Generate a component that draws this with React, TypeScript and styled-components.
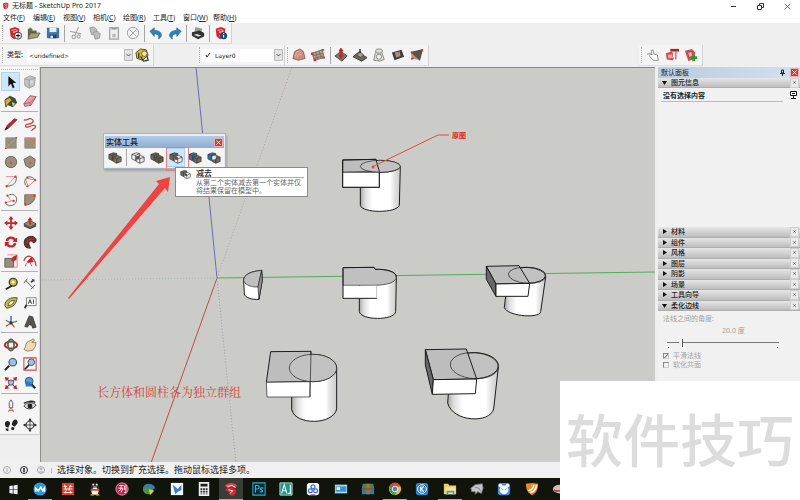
import React, { useState } from "react";
import styled, { createGlobalStyle, css } from "styled-components";

const Global = createGlobalStyle`
  * { box-sizing: border-box; }
  html, body, #root { height: 100%; }
  body {
    margin: 0;
    overflow: hidden;
    background: #efefef;
    color: #222;
    font: 7px/10px "Noto Sans", "Noto Sans CJK SC", sans-serif;
  }
  button, input, select { font: inherit; color: inherit; }
  button { padding: 0; border: 0; background: none; }
  svg { display: block; flex: none; }
`;

const Window = styled.div`
  height: 100%;
  display: flex;
  flex-direction: column;
`;

/* ---------- title and menu ---------- */
const TitleBar = styled.header`
  display: flex;
  align-items: center;
  gap: 2px;
  height: 12px;
  padding-left: 2px;
  background: #fff;
`;
const Title = styled.h1`
  flex: 1;
  margin: 0;
  font-size: 7px;
  font-weight: 400;
`;
const WindowButton = styled.button`
  width: 25px;
  height: 12px;
  display: grid;
  place-items: center;
`;
const MenuBar = styled.nav`
  display: flex;
  height: 11px;
  padding-left: 3px;
  background: #fff;
`;
const MenuButton = styled.button`
  min-width: 30px;
  text-align: left;
  line-height: 11px;
  white-space: nowrap;
`;
const AccessKey = styled.span`
  text-decoration: underline;
`;

/* ---------- toolbars ---------- */
const ToolbarRow = styled.div`
  display: flex;
  height: 22px;
  background: #efefef;
`;
const Toolbar = styled.div`
  display: flex;
  align-items: center;
  height: 21px;
  padding-right: 1px;
  background: #f4f4f4;
  border-right: 1px solid #d2d2d2;
  border-bottom: 1px solid #dedede;
`;
const Spring = styled.div<{ $grow?: number }>`
  flex: ${(p) => p.$grow ?? 1};
`;
const Handle = styled.span`
  width: 1px;
  height: 16px;
  margin: 0 2px;
  border-left: 1px dotted #aaa;
`;
const Divider = styled.span`
  width: 1px;
  height: 17px;
  margin: 0 1px 0 2px;
  background: #a6a6a6;
`;
const ToolButton = styled.button<{ $on?: boolean }>`
  width: 19px;
  height: 19px;
  display: grid;
  place-items: center;
  ${(p) => p.$on && css`background: #cfe5f8; box-shadow: inset 0 0 0 1px #aed3f2;`}
`;
const Field = styled.label`
  display: flex;
  align-items: center;
  gap: 4px;
  padding-left: 2px;
  white-space: nowrap;
`;
const SelectBox = styled.span<{ $w: number }>`
  display: flex;
  align-items: center;
  position: relative;
  width: ${(p) => p.$w}px;
  height: 13px;
  background: #fff;
`;
const Select = styled.select<{ $indent: number }>`
  appearance: none;
  width: 100%;
  height: 13px;
  padding: 0 10px 0 ${(p) => p.$indent}px;
  border: 0;
  background: transparent;
  font: 6px/13px "DejaVu Sans", sans-serif;
`;
const SelectMark = styled.svg<{ $end?: boolean }>`
  position: absolute;
  ${(p) => (p.$end ? "right: 0;" : "left: 3px;")}
  pointer-events: none;
`;

/* ---------- workspace ---------- */
const Workspace = styled.main`
  flex: 1;
  min-height: 0;
  display: grid;
  grid-template-columns: 40px minmax(0, 1fr) 145px;
`;
const Palette = styled.aside`
  background: #efefef;
`;
const PaletteInner = styled.div`
  padding: 2px 1px 0;
  background: #f5f5f5;
  border-bottom: 1px solid #ccc;
  border-right: 1px solid #ddd;
`;
const PaletteGrip = styled.div`
  height: 3px;
  border-top: 1px dotted #b5b5b5;
`;
const ToolGroup = styled.div`
  display: grid;
  grid-template-columns: 19px 19px;
  grid-auto-rows: 19px;
  & + & {
    margin-top: 1px;
    padding-top: 2px;
    border-top: 1px solid #b2b2b2;
  }
`;
const Canvas = styled.section`
  position: relative;
  overflow: hidden;
  background: #cbccc7;
  border-top: 1px solid #858585;
  border-left: 1px solid #8d8d8d;
`;
const Scene = styled.svg`
  width: 100%;
  height: 100%;
`;
const Note = styled.p<{ $x: number; $y: number; $big?: boolean }>`
  position: absolute;
  left: ${(p) => p.$x}px;
  top: ${(p) => p.$y}px;
  margin: 0;
  white-space: nowrap;
  color: ${(p) => (p.$big ? "#d4453c" : "#e02a20")};
  font-size: ${(p) => (p.$big ? 12 : 7)}px;
  font-weight: ${(p) => (p.$big ? 400 : 700)};
  line-height: ${(p) => (p.$big ? 16 : 10)}px;
  font-family: ${(p) => (p.$big ? `"Noto Serif CJK SC", ` : "")}"Noto Sans CJK SC", serif;
`;

/* ---------- floating solid tools ---------- */
const Floating = styled.div`
  position: absolute;
  left: 62px;
  top: 65px;
  width: 123px;
  padding: 2px 1px 1px;
  border: 1px solid #a7b4c6;
  background: #e6edf5;
  box-shadow: 1px 2px 2px #0003;
`;
const FloatingHead = styled.div`
  display: flex;
  align-items: center;
  justify-content: space-between;
  height: 12px;
  padding: 0 2px 0 1px;
  background: linear-gradient(#b4cbe6, #8eabd0);
  font-size: 8px;
  font-weight: 500;
`;
const RedClose = styled.button`
  width: 7px;
  height: 7px;
  display: grid;
  place-items: center;
  background: #c8403d;
  outline: 1px solid #e2b0b0;
`;
const FloatingTools = styled.div`
  display: flex;
  align-items: center;
  height: 19px;
  background: #f5f5f5;
`;
const Highlight = styled.span`
  position: absolute;
  left: 62px;
  top: 13px;
  width: 23px;
  height: 24px;
  border: 1px solid #e87f7f;
  pointer-events: none;
`;
const Tip = styled.div`
  position: absolute;
  left: 134px;
  top: 99px;
  width: 133px;
  height: 30px;
  display: grid;
  grid-template-columns: 20px 1fr;
  border: 1px solid #8b8b8b;
  background: #fff;
  color: #666;
  line-height: 8px;
`;
const TipIcon = styled.div`
  padding: 1px 0 0 4px;
`;
const TipTitle = styled.strong`
  display: block;
  height: 10px;
  line-height: 9px;
  margin: 0 3px 1px 0;
  color: #222;
  font-size: 8px;
  font-weight: 500;
  border-bottom: 1px solid #aaa;
`;
const TipLine = styled.span`
  display: block;
  white-space: nowrap;
`;

/* ---------- tray ---------- */
const Tray = styled.aside`
  margin-left: 3px;
  background: #f1f1f1;
`;
const TrayHead = styled.div`
  display: flex;
  align-items: center;
  height: 11px;
  padding: 0 2px 0 3px;
  gap: 6px;
  background: linear-gradient(90deg, #b9cbdf, #d3e1ef);
  font-size: 7px;
`;
const Grow = styled.span`
  flex: 1;
`;
const SectionHead = styled.div`
  flex: 1;
  display: flex;
  align-items: center;
  min-height: 10px;
  background: linear-gradient(#e6e6e6, #bdbdbd);
  border-bottom: 1px solid #adadad;
`;
const SectionToggle = styled.button`
  flex: 1;
  display: flex;
  align-items: center;
  gap: 4px;
  padding-left: 4px;
  line-height: 9px;
  font-weight: 500;
`;
const SectionClose = styled.button`
  width: 7px;
  height: 8px;
  margin-right: 2px;
  display: grid;
  place-items: center;
  background: #e9e9e9;
  outline: 1px solid #cfcfcf;
`;
const EntityBody = styled.div`
  display: flex;
  align-items: flex-start;
  justify-content: space-between;
  height: 139px;
  padding: 3px 3px 0 3px;
`;
const EntityText = styled.p`
  flex: 1;
  margin: 0 7px 0 0;
  padding: 0 2px;
  border-bottom: 1px solid #bbb;
  line-height: 10px;
  font-weight: 700;
`;
const Sections = styled.div`
  display: flex;
  flex-direction: column;
  height: 84px;
`;
const Soften = styled.div`
  padding: 3px 5px;
  color: #a2a2a2;
`;
const Angle = styled.label`
  display: grid;
  grid-template-columns: 1fr;
`;
const AngleValue = styled.output`
  display: block;
  margin: 2px 0 2px 59px;
`;
const Range = styled.input`
  appearance: none;
  width: 112px;
  height: 9px;
  margin: 0 0 0 4px;
  background: linear-gradient(#777, #777) 0 4px / 100% 1px no-repeat;
  &::-webkit-slider-thumb {
    appearance: none;
    width: 4px;
    height: 8px;
    background: #f1f1f1;
    border-right: 1px solid #555;
    border-left: 1px solid #f1f1f1;
  }
`;
const Ticks = styled.div`
  display: flex;
  justify-content: space-between;
  width: 110px;
  height: 4px;
  margin-left: 5px;
  &::before, &::after { content: ""; width: 1px; height: 1px; background: #555; }
`;
const Check = styled.label`
  display: flex;
  align-items: center;
  gap: 4px;
  height: 9px;
`;
const CheckInput = styled.input`
  appearance: none;
  width: 6px;
  height: 6px;
  margin: 0;
  border: 1px solid #888;
  border-right-color: #ccc;
  border-bottom-color: #ccc;
  &:checked { background: linear-gradient(135deg, #f1f1f1 40%, #888 45%, #888 60%, #f1f1f1 65%); }
`;

/* ---------- status and task bar ---------- */
const Status = styled.footer`
  display: flex;
  align-items: center;
  gap: 9px;
  height: 16px;
  padding-left: 3px;
  background: #f0f0f0;
  font-size: 9px;
  line-height: 16px;
`;
const StatusText = styled.span`
  margin-left: -4px;
`;
const StatusRule = styled.span`
  width: 1px;
  height: 5px;
  margin-left: -3px;
  background: #bbb;
`;
const TaskBar = styled.nav`
  height: 22px;
  background: #11140b;
`;
const TaskList = styled.div`
  display: flex;
  justify-content: space-between;
  max-width: 572px;
  height: 22px;
  padding: 0 1px;
`;
const TaskButton = styled.button<{ $state?: "open" | "front" }>`
  width: 24px;
  display: grid;
  place-items: center;
  ${(p) => p.$state === "front" && "background: #393c36;"}
  ${(p) => p.$state && "box-shadow: inset 0 -1px #76b9ed;"}
`;
const Watermark = styled.div`
  position: fixed;
  right: 0;
  bottom: 0;
  width: 240px;
  height: 119px;
  display: flex;
  justify-content: center;
  background: #fff;
  color: #dcdcdc;
  font: 500 57px/112px "Noto Sans CJK SC", sans-serif;
  white-space: nowrap;
`;

/* ---------- icons, drawn on a 16 unit grid ---------- */
const R = "#c3262d";
const T = "#96917d";
const D = "#3b3b38";

const SuMark = () => (
  <g>
    <path d="M2 3 8 1l5 2-1 8-5 4-4-3Z" fill="#cf2730" />
    <path d="M4 5l5-1 2 2-5 1 4 2-1 3-3-1" fill="none" stroke="#f3c5c5" strokeWidth="1" />
  </g>
);
const Cubes = ({ a, b, line = "#3a3833" }: { a: string; b: string; line?: string }) => (
  <g stroke={line} strokeWidth=".8" strokeLinejoin="round">
    <path d="M1 4 6 2l4 1v6l-5 2-4-2Z" fill={a} />
    <path d="M1 4l4 1 5-2M5 5v6" fill="none" />
    <path d="M6 7l5-2 4 2v5l-5 2-4-2Z" fill={b} />
    <path d="M6 7l4 2 5-2M10 9v5" fill="none" />
  </g>
);

const art: Record<string, React.ReactNode> = {
  logo: <SuMark />,
  newDoc: <><SuMark /><circle cx="11.500" cy="11" r="4" fill="#fff" stroke="#222" /><path d="M11.500 8.500v5M9 11h5" stroke="#222" strokeWidth="1.200" /></>,
  open: <><path d="M1 3h4l1 2h5v4H4l-3 5Z" fill="#6c6449" /><path d="M4 8h11l-3 5-11 2Z" fill="#a59c78" stroke="#4d4736" strokeWidth=".7" /><path d="M3 2l3 3" stroke="#3c9a3c" strokeWidth="2" /></>,
  save: <><path d="M1 2h13l1 1v11H2l-1-1Z" fill="#3f75a8" /><path d="M4 2h8v5H4z" fill="#e6edf3" /><path d="M4 10h8v4H4z" fill="#26415e" /><path d="M5 11h3v3H5z" fill="#dde" /></>,
  cut: <g fill="none" stroke="#a5a5a5" strokeWidth="1.300"><path d="M11 1 7 10M1 6l13 3" /><circle cx="5.500" cy="12.500" r="2" /><circle cx="11" cy="12" r="1.800" /></g>,
  copy: <><path d="M2 2l5-1 3 3-1 5-5 1Z" fill="#bbb" stroke="#999" /><path d="M6 7l5-1 3 3-1 5-5 1Z" fill="#bbb" stroke="#999" /></>,
  paste: <><rect x="3" y="2" width="10" height="13" fill="#eee" stroke="#a5a5a5" strokeWidth="1.500" /><path d="M5 2h6v2H5z" fill="#999" /><path d="M6 9h4v4H6z" fill="#bbb" /></>,
  erase: <g fill="none" stroke="#9a9a9a"><circle cx="8" cy="8" r="6.500" /><path d="M4 4l8 8M12 4l-8 8" /></g>,
  undo: <path d="M1 6 6 2v3c6 0 9 3 8 7l-3 3c1-4-1-6-5-6v3Z" fill="#2b83bd" stroke="#17537d" strokeWidth=".6" />,
  redo: <path d="M15 6 10 2v3C4 5 1 8 2 12l3 3c-1-4 1-6 5-6v3Z" fill="#2b83bd" stroke="#17537d" strokeWidth=".6" />,
  print: <><path d="M5 1l8 2-2 5-7-1Z" fill="#9b9b9b" /><path d="M1 7l9-2 5 3v4l-7 3-7-4Z" fill="#333" /><path d="M3 10l5 2 4-1-5-2Z" fill="#ddd" /></>,
  info: <><SuMark /><circle cx="11" cy="11" r="4" fill="#1f4776" /><path d="M11 10v3M11 8v1" stroke="#fff" strokeWidth="1.300" /></>,
  tags: <><path d="M1 5l5-4 6 1 2 6-6 5-6-2Z" fill="#d9bd36" stroke="#50471b" /><circle cx="10" cy="6" r="3" fill="#eee9bd" stroke="#5c531f" /><path d="M4 5v6M6 9l3 5 5-1-1-4" fill="none" stroke="#333" strokeWidth="1.300" /></>,
  contours: <><path d="M1 12 3 4l6-3 4 3 2 8-8 2Z" fill="#c98b7c" stroke="#765047" strokeWidth=".8" /><path d="M4 10c0-6 3-7 6-5M6 11c0-4 2-5 5-3" fill="none" stroke="#e8c1b5" /></>,
  scratch: <><path d="M1 6l12-4 2 9-11 3Z" fill="#a7a08d" stroke="#5d594f" strokeWidth=".8" /><path d="M2 9l12-3M3 12l11-3M5 4l3 9M9 3l3 9" stroke="#5d594f" strokeWidth=".6" /><g fill="#db3335"><path d="M3 12h3v3H3zM0 5h3v3H0zM12 1h3v2h-3zM13 10h3v2h-3z" /></g></>,
  smoove: <><path d="M1 9l7-5 7 5-6 6Z" fill="#7a7669" stroke="#4b473d" /><path d="M8 1v10M6 4l2-3 2 3M6 8l2 3 2-3" fill="none" stroke={R} strokeWidth="2" /></>,
  stamp: <><path d="M0 10l6-5 10 6-6 4Z" fill="#6a675e" stroke="#373530" /><path d="M4 8l4-4 4 4-3 3Z" fill="#a9a596" stroke={D} /><path d="M8 6V1" stroke="#222" strokeWidth="1.500" /></>,
  drape: <g fill="#ddd" stroke="#8a8a86" strokeWidth="1.100"><path d="M2 14 4 5h7l3 8-5 2Z" /><ellipse cx="8" cy="3.500" rx="4" ry="2.500" /><circle cx="8" cy="10" r="3" fill="#eee" /></g>,
  detail: <><path d="M1 5l11-3 3 8-11 4Z" fill="#3d3b35" /><path d="M4 5l6-1 1 5-5 2Z" fill="#a38e84" /></>,
  flip: <><path d="M1 5l13-3-3 12Z" fill="#5b544a" stroke="#453d34" /><path d="M1 5l10 9-9-2Z" fill="#a39a84" /><path d="M1 4h2v2H1zM13 1h2v3h-2zM1 11h3v2H1z" fill="#d33" /></>,
  hand2: <path d="M1 7c5-1 4 0 3 2l4 5h6l-1-6-4-1-1-5-2 1 1 5-3-2" fill="#fff" stroke="#777" strokeWidth=".9" />,
  pages: <><path d="M1 6l7-2 3 5-2 5-7-1Z" fill="#cf4a4e" /><path d="M3 8l5-1 1 4-5 1Z" fill="#e9a5a4" /><path d="M6 1h10v3H6z" fill="#a5272c" /><path d="M9 5h5v6H9z" fill="#eee" /><path d="M12 4h1v9h-1z" fill="#a5272c" /></>,
  pagesAdd: <><path d="M1 3l8-2 4 4-1 7-7 3Z" fill="#cb5557" /><path d="M4 5l5-1 1 5-4 2Z" fill="#e7b1aa" stroke="#703033" strokeWidth=".7" /><path d="M11 8v7M8 11h7" stroke="#2c9a2c" strokeWidth="3" /></>,

  select: <path d="M5 1v12l3-3 2 5 2-1-2-5h4Z" fill="#111" />,
  component: <><path d="M2 4l6-3 6 2-1 9-6 3-5-3Z" fill="#c4c4c4" stroke="#999" /><path d="M2 4l5 2 7-3M7 6v9" fill="none" stroke="#999" /><circle cx="10" cy="8" r="2" fill="#ddd" /></>,
  paint: <><path d="M1 6l6-4 6 3 2 5-5 5-7-3Z" fill="#3e4a3f" /><path d="M1 7l5-3 3 3-4 4-3 4Z" fill="#d4aa3d" stroke="#584a1c" /><path d="M9 9l4 2-3 3Z" fill="#e3cf72" /></>,
  eraser: <><path d="M1 11 8 2l7 1-6 10-7 1Z" fill="#ea9ca9" stroke="#9b5965" /><path d="M1 11l7-1 7-7M8 10v3" fill="none" stroke="#a9606e" /></>,
  line: <><path d="M1 15l3-6 8-7 3 1-9 9Z" fill={R} stroke="#64151a" strokeWidth=".7" /><path d="M1 15l2-4 2 2Z" fill="#222" /></>,
  freehand: <path d="M1 3c3 2 5-2 8-1s4 3 1 5-7 0-7 3 4 1 7 0 5 0 4 2-4 1-4 4" fill="none" stroke="#b74b51" strokeWidth="1.500" />,
  rect: <><path d="M2 2h12v12H2z" fill={T} stroke="#8b8878" strokeWidth=".8" /><path d="M2 14 14 2" stroke="#e28a8a" /><circle cx="2" cy="14" r="1" fill="#d33" /><circle cx="14" cy="2" r="1" fill="#d33" /></>,
  rectRot: <><path d="M2 2h12v12H2z" fill={T} stroke="#8b8878" strokeWidth=".8" /><path d="M2 4c6-1 10 3 11 9M2 3h12" fill="none" stroke="#e07b7b" /></>,
  circle: <><circle cx="8" cy="8" r="6.500" fill={T} stroke="#66634f" /><path d="M8 9l4-5" stroke="#e57373" /><circle cx="8" cy="9" r="1.500" fill="#e05050" /></>,
  polygon: <><path d="M8 1l6 4-1 7-5 3-5-3-2-7Z" fill={T} stroke="#66634f" /><path d="M8 9l5-4" stroke="#e57373" /><circle cx="8" cy="9" r="1.500" fill="#e05050" /></>,
  arc: <><path d="M2 3h11L3 14" fill="none" stroke="#e28a8a" /><path d="M14 3c1 7-4 11-11 11" fill="none" stroke="#555" /><circle cx="13" cy="3" r="1.300" fill="#d33" /><circle cx="3" cy="14" r="1.300" fill="#d33" /></>,
  arc2: <><path d="M3 13C-1 5 8-1 14 7" fill="none" stroke="#555" /><path d="M3 7l3 7 8-7-9-2Z" fill="none" stroke="#df6b6b" /><circle cx="5" cy="4" r="1.200" fill="#d33" /><circle cx="14" cy="7" r="1.200" fill="#d33" /><circle cx="5" cy="14" r="1.200" fill="#d33" /></>,
  arc3: <><path d="M6 2c6-2 10 3 8 8s-9 6-12 2" fill="none" stroke="#555" /><path d="M4 3l4 6-6 2M8 9h4" fill="none" stroke="#e28a8a" /><circle cx="4" cy="3" r="1.300" fill="#d33" /><circle cx="2" cy="11" r="1.300" fill="#d33" /><circle cx="11" cy="9" r="1.300" fill="#d33" /></>,
  pie: <><path d="M2 2h12c0 7-4 11-12 12Z" fill={T} stroke="#66634f" /><path d="M14 2 3 14M2 2h12" stroke="#e07b7b" /><circle cx="13" cy="3" r="1.200" fill="#d33" /><circle cx="3" cy="13" r="1.200" fill="#d33" /></>,
  move: <path d="M8 0l3 4H9v3h3V5l4 3-4 3V9H9v3h2l-3 4-3-4h2V9H4v2L0 8l4-3v2h3V4H5Z" fill={R} />,
  push: <><path d="M1 9l7-4 7 4-7 4Z" fill="#8d8a7c" stroke="#4b493f" /><path d="M1 9v3l7 3 7-3V9l-7 4Z" fill="#504e46" /><path d="M8 1l3 4H9v5H7V5H5Z" fill={R} /></>,
  rotate: <path d="M2 7c0-6 9-7 11-3l2-1v5h-5l1-2C9 3 5 4 5 7ZM14 9c0 6-9 7-11 3l-2 1V8h5l-1 2c2 3 6 2 6-1Z" fill={R} />,
  follow: <><path d="M2 12C-1 4 7 0 12 2s3 7 0 7c-3-4-6-2-5 2s3 4 1 4-5 0-6-3Z" fill="#6d3030" stroke="#302b28" /><path d="M5 10C4 5 8 4 12 5" stroke={R} fill="none" strokeWidth="1.500" /></>,
  scale: <><path d="M1 5h10v10H1z" fill={T} stroke="#555245" /><path d="M4 1h11v14H1" fill="none" stroke="#e67b7b" /><path d="M8 8l2-5 5-2-1 6-3 1Z" fill={R} /></>,
  offset: <><path d="M1 8C3 0 13 0 15 14" fill="none" stroke="#b8464d" strokeWidth="1.500" /><path d="M3 14c0-6 6-6 7 0" fill="none" stroke="#b8464d" /><path d="M4 9l6-6 2 6-4 1Z" fill={R} /></>,
  tape: <><circle cx="10.500" cy="6" r="4.500" fill="#c9bd45" stroke="#45411d" strokeWidth="1.500" /><circle cx="10.500" cy="6" r="1.500" fill="#f5f5f5" /><path d="M9 10l-7 4" stroke="#2c2b20" strokeWidth="2.200" /></>,
  dimension: <g fill="none" stroke="#444"><path d="M3 4l9 9M1 7l4-5M9 14l5-5M10 2l3 3" /><path d="M9 6l4-3" strokeWidth="2" /></g>,
  protractor: <path d="M1 11C1 4 8 1 15 2c-1 8-5 11-12 12Zm4 0c4 0 6-3 7-6-4 0-7 2-7 6Z" fill="#c6b943" fillRule="evenodd" stroke="#403c1c" strokeWidth=".9" />,
  label: <><path d="M4 2h11v9H4z" fill="#fff" stroke="#777" /><path d="M6 9l2-5 2 5M7 7h2M12 4v5" stroke="#333" fill="none" /><path d="M4 10l-2 4" stroke="#333" strokeWidth="2" /></>,
  axes: <><path d="M8 9V1" stroke="#3d57ba" strokeWidth="1.500" /><path d="M8 9l-6 4M8 9l4 5" stroke={R} strokeWidth="1.300" /><path d="M8 9l7-2M8 9 2 6" stroke="#3b9c4e" strokeWidth="1.300" /><circle cx="8" cy="9" r="1.800" fill="#333" /></>,
  text3d: <path d="M2 13 7 1l4 1 4 12-4 1-1-3-3-1-2 3Z" fill="#55544e" stroke="#33322e" strokeWidth=".8" />,
  orbit: <><ellipse cx="8" cy="8" rx="7" ry="4" fill="none" stroke={R} strokeWidth="2.200" /><ellipse cx="8" cy="8" rx="3.500" ry="6.500" fill="none" stroke="#3c7350" strokeWidth="2" /></>,
  pan: <path d="M1 13C4 10 2 6 6 4l6-3 1 2-3 2 5 0-1 5-3 4-6 1Z" fill="#eddab4" stroke="#80704c" strokeWidth=".9" />,
  zoom: <><path d="M6 10l-5 5" stroke="#222" strokeWidth="2.200" /><circle cx="10" cy="6" r="4.300" fill="#9ec1dd" stroke="#34516e" strokeWidth="1.300" /></>,
  zoomWin: <><path d="M1 1h14v14H1z" fill="none" stroke="#d9444a" strokeWidth="1.200" /><path d="M7 9l-5 5" stroke="#222" strokeWidth="2" /><circle cx="9.500" cy="6" r="3.800" fill="#9ec1dd" stroke="#34516e" /></>,
  extents: <><path d="M1 1l5 1-4 4ZM15 1l-5 1 4 4ZM1 15l1-5 4 4ZM15 15l-1-5-4 4Z" fill={R} /><path d="M3 3l10 10M13 3 3 13" stroke={R} strokeWidth="1.500" /><circle cx="8" cy="7.500" r="3" fill="#9ec1dd" stroke="#34516e" /></>,
  previous: <><path d="M9 9l5 5" stroke="#222" strokeWidth="2.500" /><circle cx="7" cy="6" r="4.500" fill="#5b9ccc" stroke="#27527a" /><path d="M3 12V6l7 1-2 2 4 3Z" fill="#2d7bb8" /></>,
  camera: <><path d="M8 1l2 3v6H6V4Z" fill="#eee" stroke="#555" /><path d="M8 10l-3 5M8 10l3 5M5 13h6" stroke="#cf5757" /></>,
  look: <><path d="M1 8c4-5 10-5 14-1-4 5-10 6-14 1Z" fill="#ddd" stroke="#222" /><circle cx="8" cy="8" r="2.800" fill="#222" /><path d="M1 5c4-3 10-3 13-1" fill="none" stroke="#222" strokeWidth="1.500" /></>,
  walk: <><path d="M2 10c-3-5 1-8 4-6 2 3 0 4-1 7ZM2 12l3 0 0 3-3-1ZM9 8c0-5 4-8 6-5s-1 5-3 7ZM9 10l3 1-1 3-3-1Z" fill="#222" /></>,
  section: <><circle cx="8" cy="8" r="4.500" fill="#f5f5f5" stroke="#222" /><path d="M1 8h14M8 1v14" stroke="#444" /><path d="M8 0l2 3H6ZM8 16l2-3H6ZM0 8l3-2v4ZM16 8l-3-2v4Z" fill="#222" /></>,

  shell: <Cubes a="#69665a" b="#767364" />,
  intersect: <><Cubes a="#f5f5f5" b="#e8e8e8" line="#333" /><path d="M6 6l4-1v4l-4 1Z" fill="#555" /></>,
  union: <Cubes a="#6b6859" b="#5d5b4e" />,
  subtract: <><Cubes a="#6b6a60" b="#eee" /><path d="M7 7h3v3H7z" fill="#444" /></>,
  trim: <Cubes a="#2f74ad" b="#6d695c" />,
  split: <><Cubes a="#2f74ad" b="#6d695c" /><path d="M6 6l4-1v4l-4 1Z" fill="#e4f1f8" /></>,

  win: <path d="M2 3l5-1v5.500H2zM8 2l6-1v6.500H8zM2 8.500h5V14l-5-1zM8 8.500h6V15l-6-1z" fill="#eee" />,
  maxthon: <><circle cx="8" cy="8" r="7.500" fill="#2a9bdc" /><path d="M3 11V7l3 3 3-4 2 4 2-3v4" fill="none" stroke="#fff" strokeWidth="1.800" /></>,
  redApp: <><path d="M1 1h14v14H1z" fill="#e23b2e" /><path d="M3 5h4M9 5h4M4 3l2 7M11 3l-2 7M3 8h10M3 12h10M5 10v3M11 10v3" stroke="#fff" strokeWidth="1" /></>,
  qq: <><ellipse cx="8" cy="8" rx="5" ry="7" fill="#282828" /><ellipse cx="8" cy="10.500" rx="4" ry="4" fill="#fff" /><path d="M3 8h10v2H3z" fill="#e33" /><path d="M6 5h4v1.500H6zM3 14h4v1.500H3zM9 14h4v1.500H9z" fill="#f0b62d" /><path d="M5 2h2v2H5zM9 2h2v2H9z" fill="#fff" /></>,
  li: <><circle cx="8" cy="8" r="7" fill="#bf244b" stroke="#e5a4b5" /><path d="M5 4h5M7 4v4M4 7h5l-2 5M4 11l3-3M11 4v5M12.500 3v9l-2 0" fill="none" stroke="#fff" /></>,
  idm: <><circle cx="7" cy="8" r="6" fill="#4f8f46" /><path d="M1 8c3-7 12-8 14-1l-4 2c-2-5-6-3-10-1Z" fill="#377bbf" /><path d="M8 8l6 2-5 5Z" fill="#e7c93e" /></>,
  bird: <><path d="M1 1h14v14H1z" fill="#f5f8fb" /><path d="M3 3l6 5 4-5v6l-4 2-3 3-1-4Z" fill="#3380d1" /></>,
  calc: <><path d="M2 0h12v16H2z" fill="#eee" /><path d="M4 2h8v3H4zM4 7h2v2H4zM7 7h2v2H7zM10 7h2v2h-2zM4 10h2v2H4zM7 10h2v2H7zM10 10h2v2h-2zM4 13h2v1H4zM7 13h2v1H7zM10 13h2v1h-2z" fill="#222" /></>,
  sketch: <><path d="M1 4c4-4 11-4 14 0l-2 3-5-2-4 2Z" fill="#ea4148" /><path d="M2 8l6-2 6 3-1 5-4 2-5-3 4-1-6-2Z" fill="#d52a33" /><path d="M4 5l5-1 4 2M5 9l5 1-3 3" fill="none" stroke="#fff" /></>,
  ps: <><path d="M1 1h14v14H1z" fill="#0a2733" stroke="#2aa9d1" strokeWidth="1.200" /><path d="M4 12V4h2c3 0 3 4 0 4H4M13 7c-4-1-4 1-2 2s1 3-2 2" fill="none" stroke="#35b3dd" strokeWidth="1.300" /></>,
  acad: <><path d="M1 1h14v14H1z" fill="#2a9482" stroke="#b9ded6" /><path d="M3 13 6 3l3 10M4 10h4M13 3v10M10 13h4" fill="none" stroke="#dff" strokeWidth="1.300" /></>,
  baidu: <><rect x="1" y="1" width="14" height="14" rx="3" fill="#f4f7fb" /><g fill="none" stroke="#3b72d5" strokeWidth="1.400"><circle cx="8" cy="5.500" r="2.200" /><circle cx="5" cy="10" r="2.200" /><circle cx="11" cy="10" r="2.200" /></g><path d="M6 14h4v1H6z" fill="#d33" /></>,
  monitor: <><path d="M1 3h14v10H1z" fill="#a5d8f2" /><path d="M2 5h12v6H2z" fill="#3993cb" /><path d="M3 6h4v3H3z" fill="#fff" /></>,
  chest: <><path d="M2 2h12l1 5H1Z" fill="#3e8657" /><path d="M1 7h14v7H1z" fill="#2c80a3" /><path d="M6 2h4v12H6z" fill="#a37139" /><path d="M1 7h14v2H1z" fill="#9d4b3d" /></>,
  chrome: <><circle cx="8" cy="8" r="7" fill="#e6bd36" /><path d="M2 4c4-5 10-4 12.500 1H8L5 10Z" fill="#d8483a" /><path d="M2 4c-2 5 1 10 6 11l2-5H6Z" fill="#3f9a55" /><circle cx="8" cy="8" r="3.200" fill="#4584d2" stroke="#fff" /></>,
  kapp: <><rect x="1" y="1" width="14" height="14" rx="3" fill="#2e83d2" /><circle cx="8" cy="8" r="5" fill="none" stroke="#fff" /><path d="M6.500 5v6M10 5 7 8l3 3" fill="none" stroke="#fff" strokeWidth="1.300" /></>,
  folder: <><path d="M1 2h5l1 2h8v10H1z" fill="#eecd69" /><path d="M3 6h11v8H3z" fill="#f7e39f" /><path d="M4 10h9v4h-2v-2H6v2H4z" fill="#4ba1c2" /></>,
  rhino: <><path d="M1 7l5-4 8-1 1 5-2 6-4-2-3 3 0-3-4 0Z" fill="#c4c4c4" stroke="#777" /><path d="M6 6l4 1 2 3" fill="none" stroke="#777" /></>,
  panda: <><rect x="1" y="1" width="14" height="14" rx="3" fill="#3f8de0" /><circle cx="8" cy="9" r="5" fill="#fff" /><circle cx="4" cy="4" r="2" fill="#fff" /><circle cx="12" cy="4" r="2" fill="#fff" /><path d="M5 7l2 2M11 7 9 9" stroke="#3f8de0" /></>,
  shield: <><path d="M1 2l7-1 7 1c0 6-2 11-7 13C3 13 1 8 1 2Z" fill="#e78b24" /><path d="M13 3c0 5-3 8-7 9M10 3c0 4-3 6-6 7" fill="none" stroke="#fff" strokeWidth="1.800" /></>,
  shell2: <><ellipse cx="9" cy="8" rx="8" ry="5" fill="#d7bcb6" /><path d="M2 9c4 3 8 1 12-2" stroke="#9e4540" fill="none" strokeWidth="2" /></>,
};

const Icon = ({ name, size = 14 }: { name: string; size?: number }) => (
  <svg width={size} height={size} viewBox="0 0 16 16" aria-hidden="true">{art[name]}</svg>
);

const Cross = ({ c = "#333", s = 5 }: { c?: string; s?: number }) => (
  <svg width={s} height={s} viewBox="0 0 10 10" aria-hidden="true">
    <path d="M1 1l8 8M9 1 1 9" stroke={c} strokeWidth={s > 6 ? 1 : 2} />
  </svg>
);

const Tools = ({ groups }: { groups: string[][] }) => (
  <>
    {groups.map((g, i) => (
      <React.Fragment key={i}>
        {i > 0 && <Divider />}
        {g.map((n) => (
          <ToolButton key={n} aria-label={n}><Icon name={n} /></ToolButton>
        ))}
      </React.Fragment>
    ))}
  </>
);

const Drop = () => (
  <SelectMark $end width="9" height="12" viewBox="0 0 9 12" aria-hidden="true">
    <path d="M.5.5h8v11h-8z" fill="#e2e2e2" stroke="#b9b9b9" />
    <path d="M2.500 5l2 2 2-2" fill="none" stroke="#555" />
  </SelectMark>
);

const menus = [
  ["文件", "F"], ["编辑", "E"], ["视图", "V"], ["相机", "C"],
  ["绘图", "R"], ["工具", "T"], ["窗口", "W"], ["帮助", "H"],
];
const palette = [
  ["select", "component", "paint", "eraser"],
  ["line", "freehand", "rect", "rectRot", "circle", "polygon", "arc", "arc2", "arc3", "pie"],
  ["move", "push", "rotate", "follow", "scale", "offset"],
  ["tape", "dimension", "protractor", "label", "axes", "text3d"],
  ["orbit", "pan", "zoom", "zoomWin", "extents", "previous"],
  ["camera", "look", "walk", "section"],
];
const sections = ["材料", "组件", "风格", "图层", "阴影", "场景", "工具向导", "柔化边线"];
const tasks: [string, ("open" | "front")?][] = [
  ["win"], ["maxthon", "open"], ["redApp"], ["qq"], ["li"], ["idm"], ["bird"], ["calc"],
  ["sketch", "front"], ["ps"], ["acad"], ["baidu"], ["monitor"], ["chest"], ["chrome", "open"],
  ["kapp"], ["folder", "open"], ["rhino"], ["panda"], ["shield"], ["shell2"],
];

const Model = () => (
  <Scene viewBox="41 67 614 395" preserveAspectRatio="xMinYMin slice" aria-label="model">
    <defs>
      <linearGradient id="side">
        <stop offset="0" stopColor="#aaa" />
        <stop offset=".12" stopColor="#dedede" />
        <stop offset=".3" stopColor="#fff" />
        <stop offset=".75" stopColor="#fff" />
        <stop offset=".85" stopColor="#e4e4e4" />
        <stop offset="1" stopColor="#ccc" />
      </linearGradient>
    </defs>
    <path d="M196 66 217 277" stroke="#6a6ab8" />
    <path d="M217 277 151 462" stroke="#b8504e" />
    <path d="M217 277 655 271" stroke="#52ad57" />
    <path d="M217 277 236 462" stroke="#8e8fa5" strokeWidth=".8" strokeDasharray="1 2" />
    <path d="M217 277 292 66" stroke="#b09290" strokeWidth=".8" strokeDasharray="1 2" />
    <path d="M217 277 41 279" stroke="#9db59b" strokeWidth=".8" strokeDasharray="1 2" />

    <g stroke="#1c1c1c" strokeWidth="3" strokeLinejoin="round" fill="none">
      <g transform="translate(95 125) scale(.33333)">
        <path d="M446 463C446 445 470 436 500 433L502 462 492 520C470 522 449 514 448 504Z" fill="#fff" />
        <path d="M446 463C446 445 470 436 500 433L489 483C466 484 448 475 446 463Z" fill="#bfbfbf" strokeWidth="2" />
        <path d="M500 433 489 483 492 520 502 462Z" fill="#999" strokeWidth="2" />
      </g>
      <g transform="translate(230 140) scale(.33333)">
        <path d="M391 76V193C396 217 500 217 508 193L511 76Z" fill="url(#side)" />
        <ellipse cx="451" cy="76" rx="60" ry="18" fill="#c2c2c2" />
        <path d="M338 57 438 55 448 92 338 94Z" fill="#bdbdbd" />
        <ellipse cx="451" cy="76" rx="60" ry="18" fill="#c2c2c2" strokeWidth="2" />
        <path d="M338 94H448V139H338Z" fill="#fff" strokeWidth="2" />
        <path d="M438 55 448 92V139H338V57Z" />

        <path d="M388 430V512C392 538 492 540 497 512L499 408Z" fill="url(#side)" />
        <path d="M339 380 432 379 436 385C470 384 499 392 499 408S470 433 430 433H339Z" fill="#c0c0c0" strokeWidth="2" />
        <path d="M340 434H440V472H340Z" fill="#fff" stroke="none" />
        <path d="M440 434V472" strokeWidth="1.500" stroke="#888" />
        <path d="M440 472H339V380L432 379 436 385C470 384 499 392 499 408" />

        <path d="M830 440 823 500C835 527 930 533 932 512L947 408Z" fill="url(#side)" />
        <ellipse cx="891" cy="403" rx="56" ry="24" fill="#c2c2c2" />
        <path d="M769 376 867 374 899 427 798 429Z" fill="#bdbdbd" />
        <path d="M769 376 798 429 798 466 769 415Z" fill="#686868" />
        <path d="M798 429 899 427 894 466H798Z" fill="#fff" />
        <ellipse cx="891" cy="403" rx="56" ry="24" transform="rotate(4 891 403)" strokeWidth="2" />
      </g>
      <g transform="translate(90 330) scale(.33333)">
        <path d="M605 140V236C616 284 730 282 740 234V110Z" fill="url(#side)" />
        <ellipse cx="669" cy="111" rx="71" ry="41" fill="#c2c2c2" />
        <path d="M542 62 663 61 660 152 529 154Z" fill="#bdbdbd" />
        <path d="M529 154 660 152V198H531Z" fill="#fff" strokeWidth="2" />
        <ellipse cx="669" cy="111" rx="71" ry="41" fill="#c2c2c2" strokeWidth="2" />
        <path d="M663 61 660 198" strokeWidth="2" />

        <path d="M1078 150 1073 216C1088 274 1200 278 1211 234L1225 108Z" fill="url(#side)" />
        <ellipse cx="1153" cy="104" rx="72" ry="39" fill="#c2c2c2" />
        <path d="M1006 56 1129 54 1160 144 1030 146Z" fill="#bdbdbd" />
        <path d="M1006 56 1030 146 1027 190 1006 102Z" fill="#686868" />
        <path d="M1030 146 1160 144 1156 188 1027 190Z" fill="#fff" />
        <ellipse cx="1153" cy="104" rx="72" ry="39" transform="rotate(4 1153 104)" strokeWidth="2" />
      </g>
    </g>

    <path d="M372 166 438 134H449" fill="none" stroke="#e04a44" />
    <circle cx="373" cy="166" r="1.500" fill="#e04a44" />
    <path d="M68 297 159 183 156 180 170 176 168 191 165 187 69 298Z" fill="#ef4343" />
  </Scene>
);

export default function App() {
  const [angle, setAngle] = useState(20);
  const [smooth, setSmooth] = useState(true);
  const [coplanar, setCoplanar] = useState(false);

  return (
    <>
      <Global />
      <Window>
        <TitleBar>
          <Icon name="logo" size={8} />
          <Title>无标题 - SketchUp Pro 2017</Title>
          <WindowButton aria-label="minimize"><svg width="6" height="6"><path d="M0 3.500h5" stroke="#333" /></svg></WindowButton>
          <WindowButton aria-label="restore"><svg width="7" height="7" fill="none" stroke="#333"><path d="M.5 2.500h4v4h-4zM2.500 2V.5h4v4H5" /></svg></WindowButton>
          <WindowButton aria-label="close"><Cross s={7} /></WindowButton>
        </TitleBar>
        <MenuBar>
          {menus.map(([name, key]) => (
            <MenuButton key={key}>{name}(<AccessKey>{key}</AccessKey>)</MenuButton>
          ))}
        </MenuBar>

        <ToolbarRow>
          <Toolbar>
            <Handle />
            <Tools groups={[["newDoc", "open", "save"], ["cut", "copy", "paste", "erase"], ["undo", "redo"], ["print"], ["info"]]} />
          </Toolbar>
        </ToolbarRow>
        <ToolbarRow>
          <Toolbar>
            <Handle />
            <Field>
              类型:
              <SelectBox $w={106}>
                <Select $indent={2}><option>&lt;undefined&gt;</option></Select>
                <Drop />
              </SelectBox>
            </Field>
            <ToolButton aria-label="classifier"><Icon name="tags" size={15} /></ToolButton>
          </Toolbar>
          <Spring $grow={43} />
          <Toolbar>
            <Handle />
            <SelectBox $w={81}>
              <SelectMark width="6" height="6" viewBox="0 0 6 6" aria-hidden="true"><path d="M1 3l1 2 3-4" fill="none" stroke="#222" /></SelectMark>
              <Select $indent={13} aria-label="图层"><option>Layer0</option></Select>
              <Drop />
            </SelectBox>
          </Toolbar>
          <Toolbar>
            <Handle />
            <Tools groups={[["contours", "scratch"], ["smoove", "stamp", "drape", "detail", "flip"]]} />
          </Toolbar>
          <Spring $grow={210} />
          <Toolbar>
            <Handle />
            <Tools groups={[["hand2", "pages", "pagesAdd"]]} />
          </Toolbar>
          <Spring $grow={97} />
        </ToolbarRow>

        <Workspace>
          <Palette>
            <PaletteInner>
              <PaletteGrip />
              {palette.map((g, i) => (
                <ToolGroup key={i}>
                  {g.map((n) => (
                    <ToolButton key={n} aria-label={n} $on={n === "select"}><Icon name={n} /></ToolButton>
                  ))}
                </ToolGroup>
              ))}
            </PaletteInner>
          </Palette>

          <Canvas>
            <Model />
            <Note $x={411} $y={62}>原图</Note>
            <Note $x={56} $y={316} $big>长方体和圆柱各为独立群组</Note>
            <Floating>
              <FloatingHead>
                实体工具
                <RedClose aria-label="close"><Cross c="#fff" /></RedClose>
              </FloatingHead>
              <FloatingTools>
                <ToolButton aria-label="shell"><Icon name="shell" /></ToolButton>
                <Divider />
                {["intersect", "union", "subtract", "trim", "split"].map((n) => (
                  <ToolButton key={n} aria-label={n} $on={n === "subtract"}><Icon name={n} /></ToolButton>
                ))}
              </FloatingTools>
              <Highlight />
            </Floating>
            <Tip role="tooltip">
              <TipIcon><Icon name="subtract" size={11} /></TipIcon>
              <div>
                <TipTitle>减去</TipTitle>
                <TipLine>从第二个实体减去第一个实体并仅</TipLine>
                <TipLine>将结果保留在模型中。</TipLine>
              </div>
            </Tip>
          </Canvas>

          <Tray>
            <TrayHead>
              默认面板
              <Grow />
              <svg width="5" height="7" viewBox="0 0 5 7" aria-hidden="true"><path d="M1.500 1h2v3h-2zM0 4.500h5M2.500 4v3" fill="none" stroke="#222" /></svg>
              <RedClose aria-label="close"><Cross c="#fff" /></RedClose>
            </TrayHead>
            <SectionHead>
              <SectionToggle><svg width="5" height="5"><path d="M0 1h5L2.500 5Z" fill="#111" /></svg>图元信息</SectionToggle>
              <SectionClose aria-label="close"><Cross s={3} /></SectionClose>
            </SectionHead>
            <EntityBody>
              <EntityText>没有选择内容</EntityText>
              <svg width="7" height="8" viewBox="0 0 7 8" aria-hidden="true"><path d="M.5.5h6v4h-6zM1 7.500h5M3.500 4v4M2 2.500h3" fill="#fff" stroke="#111" /></svg>
            </EntityBody>
            <Sections>
              {sections.map((s, i) => (
                <SectionHead key={s}>
                  <SectionToggle>
                    <svg width="5" height="5"><path d={i === 7 ? "M0 1h5L2.500 5Z" : "M1 0v5l4-2.500Z"} fill="#111" /></svg>
                    {s}
                  </SectionToggle>
                  <SectionClose aria-label="close"><Cross s={3} /></SectionClose>
                </SectionHead>
              ))}
            </Sections>
            <Soften>
              <Angle>
                法线之间的角度:
                <AngleValue>{angle.toFixed(1)} 度</AngleValue>
                <Range type="range" min={0} max={180} value={angle} onChange={(e) => setAngle(Number(e.target.value))} />
              </Angle>
              <Ticks />
              <Check><CheckInput type="checkbox" checked={smooth} onChange={() => setSmooth(!smooth)} />平滑法线</Check>
              <Check><CheckInput type="checkbox" checked={coplanar} onChange={() => setCoplanar(!coplanar)} />软化共面</Check>
            </Soften>
          </Tray>
        </Workspace>

        <Status>
          <svg width="8" height="8" viewBox="0 0 8 8" fill="none" stroke="#aaa"><circle cx="4" cy="4" r="3.500" /><path d="M4 2v4" /></svg>
          <svg width="8" height="8" viewBox="0 0 8 8" fill="none" stroke="#222"><circle cx="4" cy="4" r="3.500" /><path d="M4 2v4" strokeWidth="1.500" /></svg>
          <svg width="8" height="8" viewBox="0 0 8 8" fill="none" stroke="#aaa"><circle cx="4" cy="4" r="3.500" /><circle cx="4" cy="3" r="1" /><path d="M2 6h4" /></svg>
          <StatusRule />
          <StatusText>选择对象。切换到扩充选择。拖动鼠标选择多项。</StatusText>
        </Status>
        <TaskBar>
          <TaskList>
            {tasks.map(([n, st]) => (
              <TaskButton key={n} aria-label={n} $state={st}><Icon name={n} size={n === "win" ? 11 : 14} /></TaskButton>
            ))}
          </TaskList>
        </TaskBar>
      </Window>
      <Watermark>软件技巧</Watermark>
    </>
  );
}
